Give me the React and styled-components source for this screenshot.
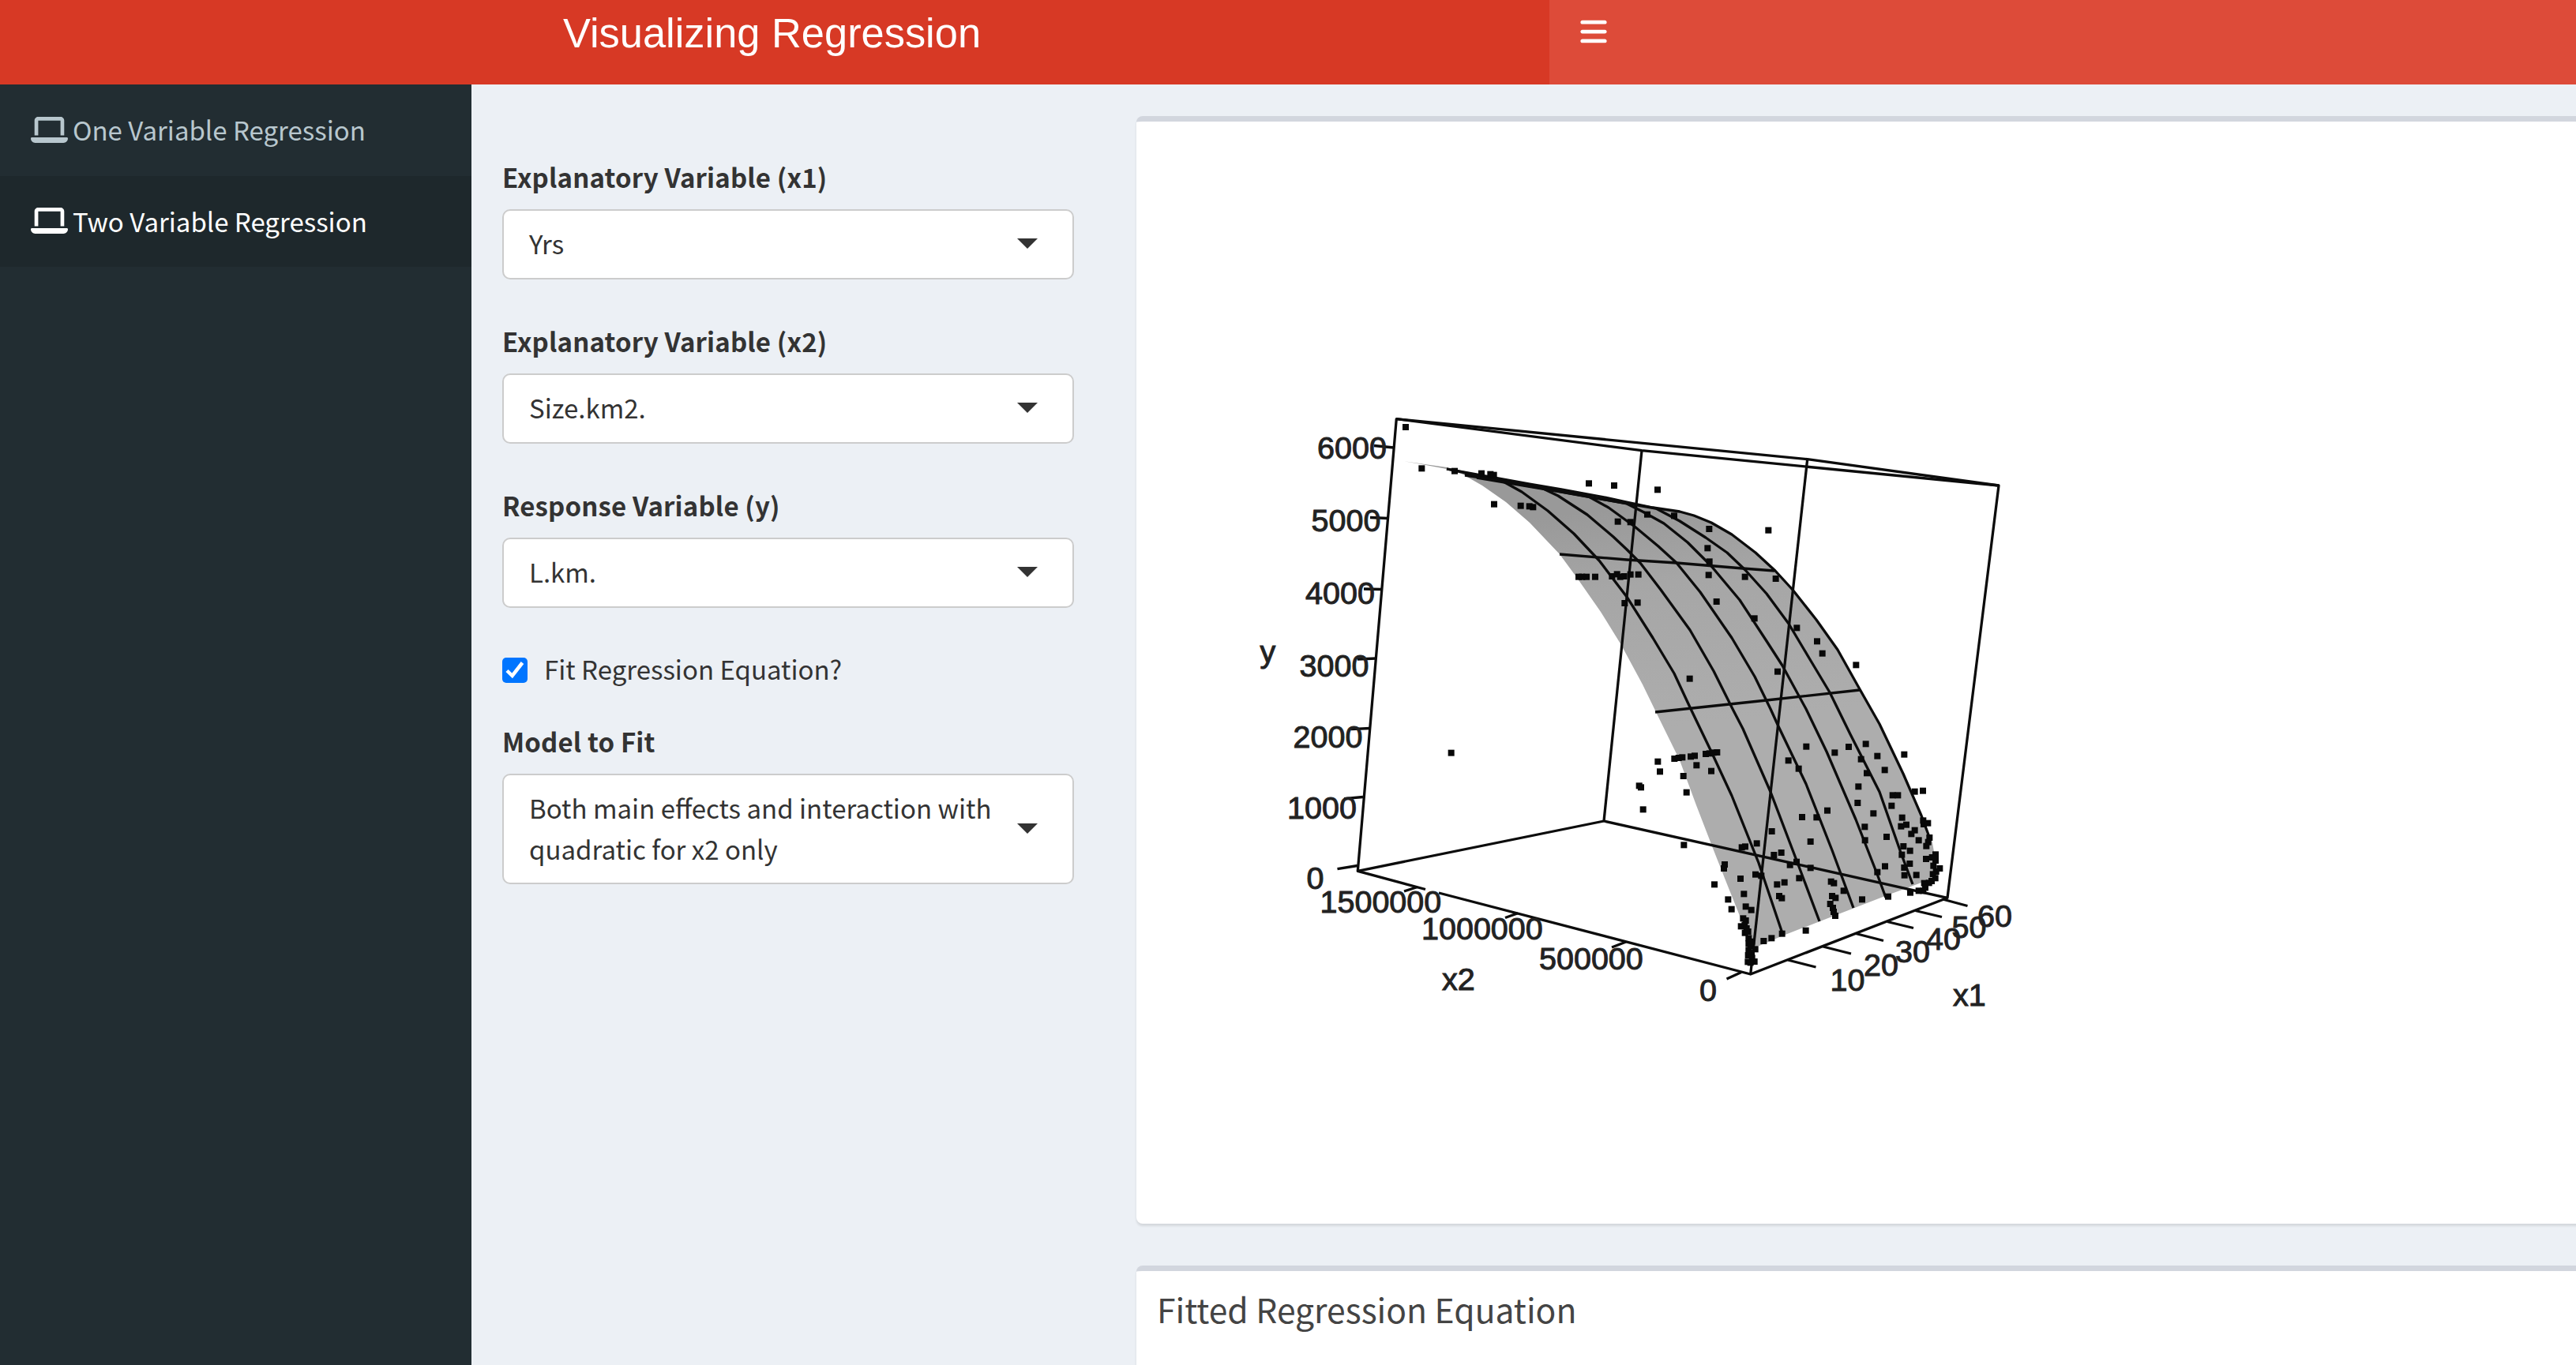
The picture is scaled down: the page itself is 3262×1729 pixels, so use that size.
import React from "react";
import styled, { createGlobalStyle } from "styled-components";
import { FaLaptop, FaBars } from "react-icons/fa6";

const sans = `"Noto Sans CJK SC", "Noto Sans", sans-serif`;
const arial = `"Liberation Sans", Arial, sans-serif`;

const GlobalStyle = createGlobalStyle`
  *, *::before, *::after { box-sizing: border-box; }
  html, body { margin: 0; padding: 0; background: #ecf0f5; }
  body { font-family: ${sans}; font-size: 33px; line-height: 52px; color: #333; }
`;

const Page = styled.div`
  display: flex;
  flex-direction: column;
  width: 100%;
  height: 100vh;
  overflow: hidden;
`;

const Header = styled.header`
  display: flex;
  flex: none;
  height: 107px;
  background: #dd4b39;
`;

const Logo = styled.div`
  width: 1962px;
  padding-right: 7px;
  background: #d73925;
  color: #fff;
  font-family: ${arial};
  font-size: 52.4px;
  line-height: 84px;
  text-align: center;
`;

const MenuButton = styled.button`
  display: flex;
  align-items: flex-start;
  padding: 21px 37px 0;
  border: 0;
  background: none;
  color: #fff;
`;

const Body = styled.div`
  display: flex;
  flex: 1;
  min-height: 0;
`;

const Sidebar = styled.nav`
  flex: none;
  width: 597px;
  background: #222d32;
`;

const NavItem = styled.a`
  display: flex;
  align-items: center;
  gap: 6px;
  height: ${(p) => (p.$active ? 115 : 116)}px;
  padding: 0 0 2px 39px;
  color: ${(p) => (p.$active ? "#fff" : "#b8c7ce")};
  background: ${(p) => (p.$active ? "#1e282c" : "transparent")};
  white-space: nowrap;
`;

const Content = styled.main`
  display: flex;
  flex: 1;
  min-width: 0;
  padding: 40px 0 0 39px;
`;

const Controls = styled.form`
  display: flex;
  flex-direction: column;
  flex: none;
  width: 724px;
  margin-right: 79px;
  padding-top: 51px;
`;

const Field = styled.div`
  display: flex;
  flex-direction: column;
  margin-bottom: ${(p) => p.$gap ?? 52}px;
`;

const Label = styled.label`
  font-weight: 700;
  letter-spacing: 0.15px;
  margin-bottom: 15px;
`;

const Select = styled.div`
  display: flex;
  align-items: center;
  justify-content: space-between;
  min-height: 89px;
  padding: 15px 44px 17px 32px;
  border: 2px solid #ccc;
  border-radius: 10px;
  background: #fff;
`;

const Value = styled.span`
  align-self: flex-start;
  white-space: nowrap;
`;

const Caret = styled.span`
  flex: none;
  border: 13px solid transparent;
  border-top-color: #333;
  border-bottom: 0;
`;

const Check = styled.label`
  display: flex;
  align-items: center;
  gap: 21px;
  margin-bottom: 40px;
`;

const CheckBox = styled.span`
  display: flex;
  width: 32px;
  height: 32px;
  margin-top: 4px;
  border-radius: 5px;
  background: #0075ff;
`;

const Results = styled.section`
  display: flex;
  flex-direction: column;
  flex: 1;
  min-width: 0;
  gap: 53px;
  margin-right: -20px;
`;

const Panel = styled.article`
  flex: none;
  height: ${(p) => p.$height}px;
  border-top: 7px solid #d2d6de;
  border-radius: 8px;
  background: #fff;
  box-shadow: 0 3px 3px rgba(0, 0, 0, 0.1);
`;

const PanelTitle = styled.h3`
  margin: 0;
  padding: 22px 26px;
  color: #444;
  font-size: 42.6px;
  font-weight: 400;
  line-height: 52px;
`;

const Plot = styled.svg`
  display: block;
  font-family: ${arial};
  font-size: 39.5px;
`;

const edges = [
  "M1768.3 530.7L2079 570.7L2531 615L2466 1137.3L2031 1040L1719.3 1103.3Z",
  "M1768.3 530.7L2288.7 581.7L2531 615",
  "M2079 570.7L2031 1040",
  "M2288.7 581.7L2216.7 1234",
  "M1719.3 1103.3L1805 1126.5M1822 1131L2216.7 1234L2466 1137.3",
];

const ticks = [
  [1740, 564.5, 1765, 567], [1735, 655.5, 1757.5, 656.5], [1727, 746, 1749.5, 746.5],
  [1719, 835, 1742.5, 834], [1711, 923.7, 1734.5, 922.5], [1702, 1011.7, 1726, 1009.5],
  [1693.5, 1100.7, 1719, 1096.5], [2264, 1216, 2299.5, 1225], [2308.5, 1199, 2344, 1208],
  [2350, 1182.5, 2385, 1191.5], [2390, 1167.5, 2423, 1175.5], [2425.5, 1153.5, 2459, 1161.5],
  [2460, 1139, 2491.5, 1147.5], [2205, 1231.5, 2186.5, 1240], [2059, 1193, 2041, 1200],
  [1922, 1156.7, 1906, 1162.5], [1795, 1123.5, 1778, 1129],
];

const labels = [
  [1668, 580.5, "6000"], [1660.5, 673, "5000"], [1653, 765, "4000"], [1645.5, 856.5, "3000"],
  [1637.5, 947, "2000"], [1630, 1036.5, "1000"], [1654.5, 1125.5, "0"], [1595.5, 839, "y"],
  [1671.5, 1156, "1500000"], [1800, 1190, "1000000"], [1949, 1228, "500000"], [2152, 1268, "0"],
  [1826, 1253.5, "x2"], [2317.5, 1255, "10"], [2360, 1236, "20"], [2400, 1219, "30"],
  [2439, 1203, "40"], [2471.5, 1187.5, "50"], [2504, 1174, "60"], [2473, 1274, "x1"],
];

const surface = [
  [1777, 584], [1832, 592], [1893, 605], [1937, 614], [1977, 621], [2027, 630], [2060, 636],
  [2093, 643], [2127, 648], [2145, 653], [2167, 662], [2193, 677], [2223, 700], [2248, 723],
  [2270, 747], [2300, 785], [2327, 823], [2355, 873], [2380, 917], [2410, 980], [2433, 1033],
  [2447, 1067], [2452, 1097], [2443, 1114], [2433, 1118], [2387, 1135], [2258, 1185], [2223, 1200],
  [2203, 1160], [2187, 1120], [2170, 1077], [2148, 1020], [2127, 963], [2097, 902], [2080, 867],
  [2053, 817], [2027, 775], [1997, 732], [1975, 702], [1937, 662], [1907, 636], [1877, 615],
  [1863, 607], [1853, 601], [1832, 594], [1800, 588],
];

const curves = [
  [[1832, 594], [1870, 602], [1900, 608], [1927, 623], [1960, 647], [1993, 676], [2025, 710], [2060, 756], [2093, 808], [2120, 853], [2141, 898], [2167, 952], [2193, 1008], [2227, 1093], [2258, 1185]],
  [[1855, 600], [1910, 609], [1950, 617], [1973, 628], [2010, 652], [2043, 680], [2060, 696], [2077, 713], [2103, 747], [2140, 798], [2170, 850], [2194, 898], [2207, 923], [2242, 1003], [2277, 1095], [2304, 1167]],
  [[1855, 602], [1937, 614], [2010, 628], [2037, 643], [2070, 667], [2100, 692], [2123, 713], [2153, 750], [2193, 808], [2222, 857], [2242, 898], [2252, 920], [2287, 993], [2320, 1077], [2347, 1150]],
  [[1870, 605], [1977, 623], [2060, 638], [2080, 648], [2107, 663], [2137, 687], [2167, 717], [2203, 760], [2237, 812], [2257, 843], [2287, 898], [2313, 952], [2350, 1038], [2377, 1107], [2388, 1137]],
  [[1893, 608], [2027, 632], [2097, 644], [2127, 660], [2160, 681], [2187, 700], [2210, 722], [2237, 752], [2265, 790], [2293, 837], [2317, 877], [2343, 930], [2380, 1003], [2407, 1080], [2422, 1120]],
  [[1832, 594], [1893, 605], [1937, 613], [1977, 620], [2027, 629], [2060, 636], [2093, 643], [2127, 648], [2145, 653], [2167, 662], [2193, 677], [2223, 700], [2248, 723], [2270, 747], [2300, 785], [2327, 823], [2355, 873], [2380, 917], [2410, 980], [2433, 1033], [2443, 1060]],
  [[1975, 702], [2060, 709], [2123, 713], [2207, 720], [2247, 723]],
  [[2096, 902], [2190, 892], [2237, 887], [2355, 874]],
];

// Observations by plot quadrant: origin, then offsets in thirds of a pixel.
const clusters = [
  { ox: 1560, oy: 500, pts: [[660, 123], [721, 280], [846, 290], [948, 299], [982, 302], [995, 305], [996, 416], [1097, 422], [1130, 424], [1144, 427], [1356, 337], [1452, 345], [1466, 482], [1317, 692], [1330, 692], [1347, 692], [1380, 692], [1444, 690], [1463, 682], [1475, 692], [1490, 690], [1492, 792]] },
  { ox: 2060, oy: 500, pts: [[117, 361], [78, 455], [180, 460], [14, 484], [313, 510], [538, 515], [307, 583], [314, 634], [311, 685], [14, 683], [44, 683], [449, 692], [566, 699], [41, 790], [341, 786], [485, 850], [646, 886], [723, 937], [743, 983], [871, 1027], [573, 1052], [239, 1079]] },
  { ox: 1560, oy: 880, pts: [[833, 221]] },
  { ox: 2060, oy: 880, pts: [
    [118, 254], [126, 292], [181, 243], [197, 240], [211, 238], [243, 235], [258, 232], [300, 225], [314, 223], [329, 220], [343, 219], [265, 268], [321, 290], [215, 309], [227, 371], [47, 346], [54, 352], [62, 436], [217, 571],
    [682, 197], [614, 250], [653, 281], [790, 220], [843, 198], [908, 187], [952, 233], [890, 245], [1054, 227], [980, 286], [912, 298], [880, 349], [877, 411], [1010, 382], [1030, 382], [1094, 368], [1125, 365], [1006, 422], [937, 451], [762, 440], [666, 465], [721, 466], [904, 502], [551, 519], [698, 558], [494, 565], [437, 580], [450, 577], [559, 609], [587, 600], [620, 647], [645, 635], [698, 658], [655, 697], [599, 713], [571, 721],
    [372, 645], [369, 660], [333, 721], [432, 699], [489, 683], [511, 688], [445, 757], [385, 778], [398, 815], [452, 805], [473, 818], [579, 765], [589, 773], [776, 710], [787, 716], [824, 745], [780, 765], [793, 772], [773, 795], [783, 810], [786, 825], [792, 840], [894, 778], [993, 767], [680, 896], [590, 908], [550, 925], [520, 936],
    [987, 540], [905, 553], [981, 652], [952, 674], [1046, 467], [1042, 500], [1062, 494], [1094, 515], [1081, 529], [1109, 553], [1051, 576], [1076, 593], [1045, 608], [1075, 642], [1054, 657], [1055, 686], [1100, 685], [1077, 752],
    [1126, 478], [1128, 492], [1144, 488], [1150, 543], [1145, 560], [1138, 575], [1173, 607], [1137, 624], [1160, 618], [1173, 630], [1165, 650], [1189, 660], [1175, 672], [1163, 682], [1172, 697], [1158, 708], [1148, 715], [1130, 716], [1134, 733], [1126, 745], [1109, 745],
    [442, 850], [452, 858], [434, 880], [448, 875], [455, 888], [449, 905], [461, 900], [463, 925], [475, 938], [463, 945], [470, 955], [488, 967], [463, 970], [474, 982], [461, 990], [476, 1000], [460, 1015], [485, 1014], [470, 1018],
  ] },
];

const toPath = (pts) => "M" + pts.map((p) => p.join(" ")).join("L");

function RegressionPlot() {
  return (
    <Plot width="1843" height="1396" viewBox="1439 154 1843 1396">
      <defs>
        <linearGradient id="shade" x1="1900" y1="660" x2="1930" y2="940" gradientUnits="userSpaceOnUse">
          <stop offset="0" stopColor="#999" />
          <stop offset="0.35" stopColor="#a6a6a6" />
          <stop offset="1" stopColor="#adadad" />
        </linearGradient>
      </defs>
      <path d={toPath(surface) + "Z"} fill="url(#shade)" />
      <g fill="none" stroke="#0c0c0c" strokeWidth="3.3" strokeLinejoin="round">
        {edges.map((d) => <path key={d} d={d} />)}
        {ticks.map(([x1, y1, x2, y2]) => <line key={x1} x1={x1} y1={y1} x2={x2} y2={y2} />)}
        {curves.map((c, i) => <path key={i} d={toPath(c)} />)}
      </g>
      <g fill="#080808">
        {clusters.map(({ ox, oy, pts }) =>
          pts.map(([x, y]) => (
            <rect key={`${ox}-${x}-${y}`} x={ox + x / 3 - 4} y={oy + y / 3 - 4} width="8" height="8" />
          ))
        )}
      </g>
      <g fill="#222" stroke="#222" strokeWidth="1">
        {labels.map(([x, y, t]) => <text key={x} x={x} y={y}>{t}</text>)}
      </g>
    </Plot>
  );
}

function SelectField({ label, value, gap }) {
  return (
    <Field $gap={gap}>
      <Label>{label}</Label>
      <Select>
        <Value>{value}</Value>
        <Caret />
      </Select>
    </Field>
  );
}

export default function App() {
  return (
    <Page>
      <GlobalStyle />
      <Header>
        <Logo>Visualizing Regression</Logo>
        <MenuButton aria-label="Toggle navigation">
          <FaBars size="38px" />
        </MenuButton>
      </Header>
      <Body>
        <Sidebar>
          <NavItem>
            <FaLaptop size="47px" />
            <span>One Variable Regression</span>
          </NavItem>
          <NavItem $active>
            <FaLaptop size="47px" />
            <span>Two Variable Regression</span>
          </NavItem>
        </Sidebar>
        <Content>
          <Controls>
            <SelectField label="Explanatory Variable (x1)" value="Yrs" />
            <SelectField label="Explanatory Variable (x2)" value="Size.km2." />
            <SelectField label="Response Variable (y)" value="L.km." gap={51} />
            <Check>
              <CheckBox>
                <svg width="32" height="32" viewBox="0 0 32 32">
                  <path d="M6 16.5L12.7 23L25.5 6.5" fill="none" stroke="#fff" strokeWidth="4.5" />
                </svg>
              </CheckBox>
              <span>Fit Regression Equation?</span>
            </Check>
            <SelectField
              label="Model to Fit"
              value={<>Both main effects and interaction with<br />quadratic for x2 only</>}
            />
          </Controls>
          <Results>
            <Panel $height={1403}>
              <RegressionPlot />
            </Panel>
            <Panel $height={300}>
              <PanelTitle>Fitted Regression Equation</PanelTitle>
            </Panel>
          </Results>
        </Content>
      </Body>
    </Page>
  );
}
